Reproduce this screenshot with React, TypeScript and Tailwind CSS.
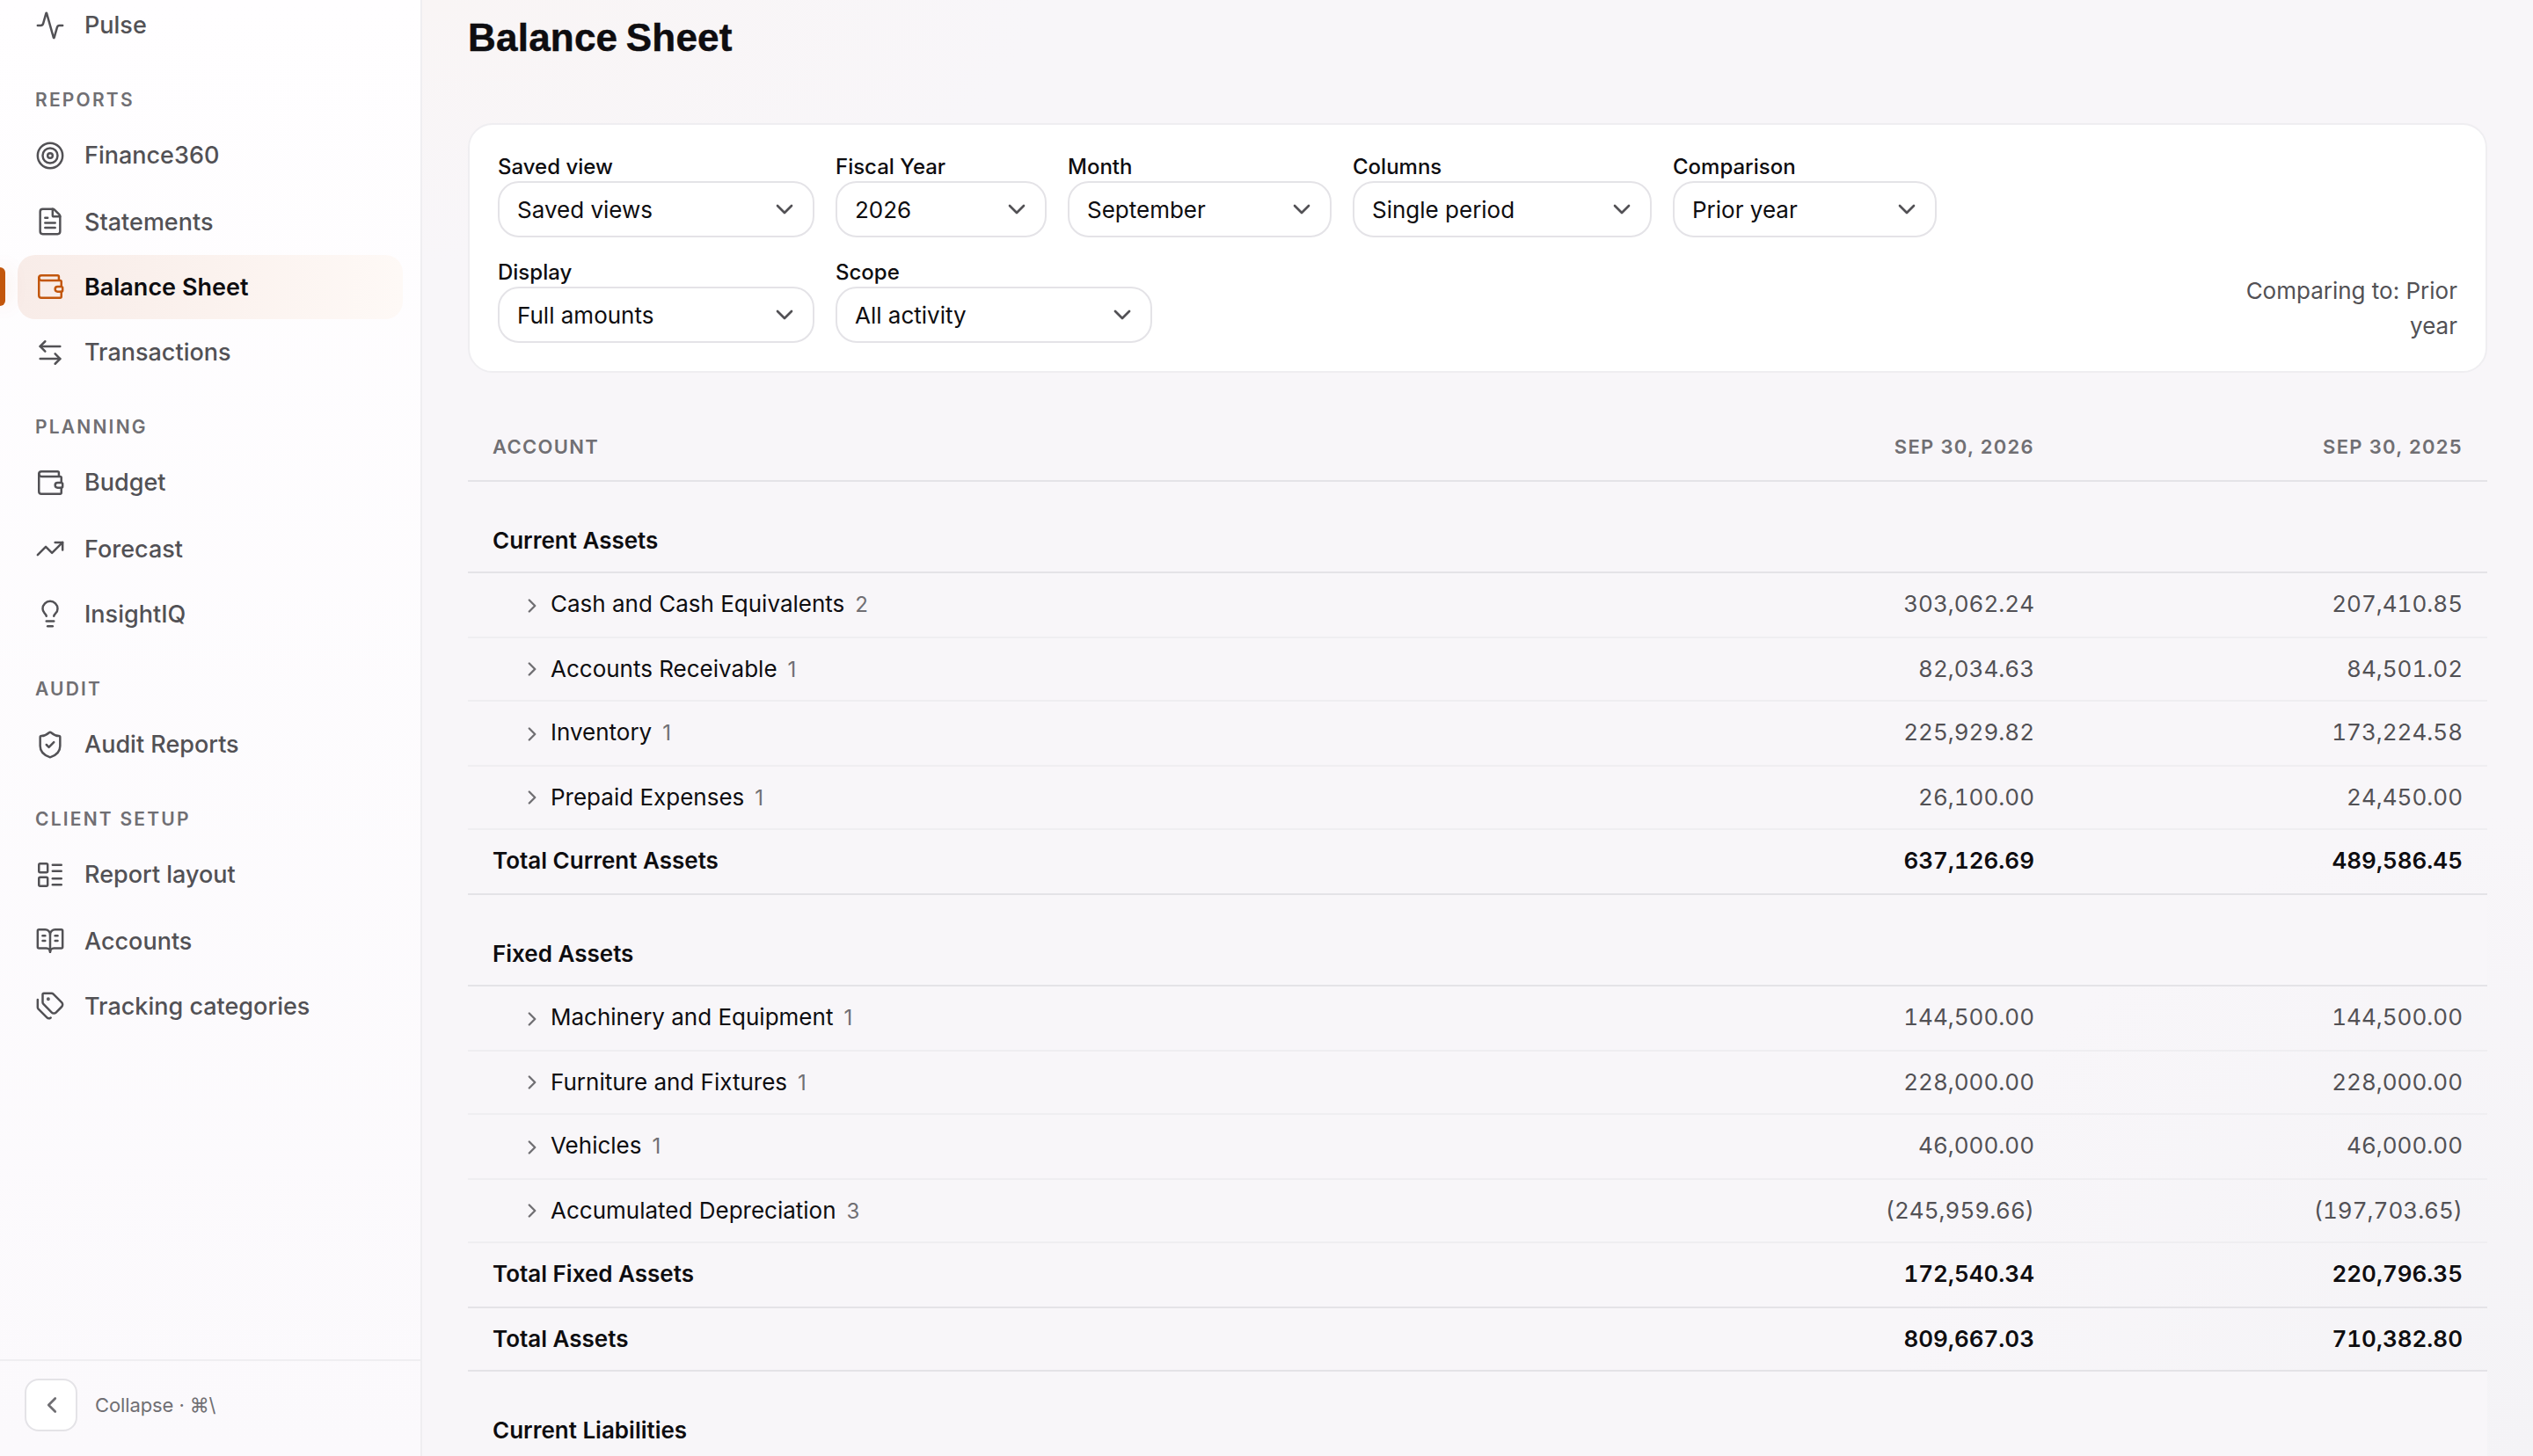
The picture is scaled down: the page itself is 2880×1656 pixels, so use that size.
import {
  Activity,
  ArrowLeftRight,
  BookOpenText,
  ChevronDown,
  ChevronLeft,
  ChevronRight,
  FileText,
  LayoutList,
  Lightbulb,
  ShieldCheck,
  Tags,
  Target,
  TrendingUp,
  Wallet,
  type LucideIcon,
} from 'lucide-react';

type NavItem = { label: string; icon: LucideIcon; active?: boolean };
type NavGroup = { title?: string; items: NavItem[] };
type Account = { name: string; count: number; values: string[] };
type Total = { name: string; values: string[] };
type Section = { title: string; accounts: Account[]; totals: Total[] };

const navGroups: NavGroup[] = [
  { items: [{ label: 'Pulse', icon: Activity }] },
  {
    title: 'Reports',
    items: [
      { label: 'Finance360', icon: Target },
      { label: 'Statements', icon: FileText },
      { label: 'Balance Sheet', icon: Wallet, active: true },
      { label: 'Transactions', icon: ArrowLeftRight },
    ],
  },
  {
    title: 'Planning',
    items: [
      { label: 'Budget', icon: Wallet },
      { label: 'Forecast', icon: TrendingUp },
      { label: 'InsightIQ', icon: Lightbulb },
    ],
  },
  { title: 'Audit', items: [{ label: 'Audit Reports', icon: ShieldCheck }] },
  {
    title: 'Client setup',
    items: [
      { label: 'Report layout', icon: LayoutList },
      { label: 'Accounts', icon: BookOpenText },
      { label: 'Tracking categories', icon: Tags },
    ],
  },
];

const periods = ['Sep 30, 2026', 'Sep 30, 2025'];

const sections: Section[] = [
  {
    title: 'Current Assets',
    accounts: [
      { name: 'Cash and Cash Equivalents', count: 2, values: ['303,062.24', '207,410.85'] },
      { name: 'Accounts Receivable', count: 1, values: ['82,034.63', '84,501.02'] },
      { name: 'Inventory', count: 1, values: ['225,929.82', '173,224.58'] },
      { name: 'Prepaid Expenses', count: 1, values: ['26,100.00', '24,450.00'] },
    ],
    totals: [{ name: 'Total Current Assets', values: ['637,126.69', '489,586.45'] }],
  },
  {
    title: 'Fixed Assets',
    accounts: [
      { name: 'Machinery and Equipment', count: 1, values: ['144,500.00', '144,500.00'] },
      { name: 'Furniture and Fixtures', count: 1, values: ['228,000.00', '228,000.00'] },
      { name: 'Vehicles', count: 1, values: ['46,000.00', '46,000.00'] },
      { name: 'Accumulated Depreciation', count: 3, values: ['(245,959.66)', '(197,703.65)'] },
    ],
    totals: [
      { name: 'Total Fixed Assets', values: ['172,540.34', '220,796.35'] },
      { name: 'Total Assets', values: ['809,667.03', '710,382.80'] },
    ],
  },
  { title: 'Current Liabilities', accounts: [], totals: [] },
];

function NavLink({ label, icon: Icon, active }: NavItem) {
  return (
    <a
      className={`group relative flex h-[72.5px] items-center gap-[22px] rounded-[20px] px-5 text-[27px] ${
        active
          ? 'bg-linear-to-r from-[#f8ece8] via-[#fbf2ee] to-[#fef9f6] font-semibold text-[#0e0d10]'
          : 'font-medium text-[#525155]'
      }`}
    >
      {active && (
        <span className="absolute top-1/2 -left-5 h-11 w-1.5 -translate-y-1/2 rounded-r-[6px] bg-[#c2560c] shadow-[0_0_24px_rgba(194,86,12,0.2)]" />
      )}
      <Icon size={34} strokeWidth={1.75} className={active ? 'text-[#c2560c]' : ''} />
      <span className="pt-px group-first:pt-0 group-nth-2:pt-0.5">{label}</span>
    </a>
  );
}

function Sidebar() {
  return (
    <aside className="flex w-[480px] shrink-0 flex-col border-r-2 border-[#efeef1] bg-linear-to-b from-[#fffeff] to-[#fbf9fc]">
      <nav className="-mt-[7.5px] flex-1 px-5">
        {navGroups.map((group) => (
          <div key={group.items[0].label}>
            {group.title && (
              <h2 className="flex h-[76px] items-center px-5 pt-[22px] text-[21px] font-semibold tracking-[0.105em] text-[#706f73] uppercase">
                {group.title}
              </h2>
            )}
            <div className="flex flex-col gap-[2px]">
              {group.items.map((item) => (
                <NavLink key={item.label} {...item} />
              ))}
            </div>
          </div>
        ))}
      </nav>
      <div className="flex h-[110px] items-start gap-5 border-t-2 border-[#efeef1] px-7 pt-5">
        <button className="flex size-[60px] items-center justify-center rounded-[16px] border-2 border-[#e4e3e7] bg-white pl-0.5 text-[#706f73]">
          <ChevronLeft size={30} strokeWidth={2.2} />
        </button>
        <span className="flex h-[60px] items-center text-[22px] tracking-[-0.005em] text-[#706f73]">
          Collapse · ⌘\
        </span>
      </div>
    </aside>
  );
}

function Select({ label, value, width }: { label: string; value: string; width: string }) {
  return (
    <label className={`flex flex-col ${width}`}>
      <span className="text-2xl font-medium text-[#0e0d10]">{label}</span>
      <span className="flex h-16 items-center justify-between rounded-[24px] border-2 border-[#e4e3e7] bg-white pr-4 pl-5 text-[26px] text-[#0e0d10]">
        <span>{value}</span>
        <ChevronDown size={32} strokeWidth={2} className="text-[#525155]" />
      </span>
    </label>
  );
}

function Filters() {
  return (
    <div className="flex h-[284px] flex-col gap-6 rounded-[28px] border-2 border-[#efeef1] bg-white p-8">
      <div className="flex gap-6">
        <Select label="Saved view" value="Saved views" width="w-[360px]" />
        <Select label="Fiscal Year" value="2026" width="w-[240px]" />
        <Select label="Month" value="September" width="w-[300px]" />
        <Select label="Columns" value="Single period" width="w-[340px]" />
        <Select label="Comparison" value="Prior year" width="w-[300px]" />
      </div>
      <div className="flex items-end gap-6">
        <Select label="Display" value="Full amounts" width="w-[360px]" />
        <Select label="Scope" value="All activity" width="w-[360px]" />
        <p className="-mb-px ml-auto w-[260px] text-right text-[26px] leading-[40px] text-[#525155]">
          Comparing to: Prior year
        </p>
      </div>
    </div>
  );
}

const rowGrid = 'grid grid-cols-[1fr_488px_487px] items-center border-b-2 px-7';
const rowHeight = 'odd:h-[74px] odd:pb-[3px] even:h-[72px] even:pb-px';

function AccountRow({ name, count, values }: Account) {
  return (
    <div className={`group ${rowGrid} ${rowHeight} border-[#efeef1]`}>
      <div className="flex items-center gap-2 pl-8">
        <ChevronRight size={26} strokeWidth={2.2} className="mt-1 text-[#706f73] group-even:mt-0" />
        <div className="flex items-baseline gap-3">
          <span className="text-[#0e0d10]">{name}</span>
          <span className="text-2xl leading-none text-[#706f73]">{count}</span>
        </div>
      </div>
      {values.map((value, i) => (
        <div key={i} className="text-right text-[#525155] tabular-nums">
          {value}
        </div>
      ))}
    </div>
  );
}

function TotalRow({ name, values }: Total) {
  return (
    <div className={`${rowGrid} ${rowHeight} border-[#e4e3e7] font-semibold text-[#0e0d10]`}>
      <div>{name}</div>
      {values.map((value, i) => (
        <div key={i} className="text-right tabular-nums">
          {value}
        </div>
      ))}
    </div>
  );
}

function BalanceTable() {
  return (
    <div className="mt-[46px] text-[26px]">
      <div
        className={`${rowGrid} h-[78px] border-[#e4e3e7] text-[22px] font-semibold tracking-[0.06em] text-[#706f73] uppercase`}
      >
        <div>Account</div>
        {periods.map((period) => (
          <div key={period} className="text-right">
            {period}
          </div>
        ))}
      </div>
      {sections.map((section) => (
        <section key={section.title}>
          <h3 className="flex h-[104px] items-end border-b-2 border-[#e4e3e7] bg-[#f8f6f9] px-7 pb-[15px] leading-[40px] font-semibold text-[#0e0d10]">
            {section.title}
          </h3>
          <div>
            {section.accounts.map((account) => (
              <AccountRow key={account.name} {...account} />
            ))}
            {section.totals.map((total) => (
              <TotalRow key={total.name} {...total} />
            ))}
          </div>
        </section>
      ))}
    </div>
  );
}

export default function App() {
  return (
    <div className="flex h-[1656px] w-[2880px] overflow-hidden bg-[#f8f6f9] font-['Inter',sans-serif] antialiased">
      <Sidebar />
      <main className="flex-1 bg-[radial-gradient(700px_300px_at_0%_0%,#f9f5f5_0%,#f9f5f500_100%),radial-gradient(circle_at_100%_100%,#f4f3f6_0%,#f4f3f600_25%)] px-[52px]">
        <h1 className="flex h-[140px] items-start pt-[14px] font-['Liberation_Sans',Arial,sans-serif] text-[44px] leading-[58px] font-bold tracking-[0.005em] [word-spacing:-3px] text-[#0e0d10] [-webkit-text-stroke:0.5px]">
          Balance Sheet
        </h1>
        <Filters />
        <BalanceTable />
      </main>
    </div>
  );
}
